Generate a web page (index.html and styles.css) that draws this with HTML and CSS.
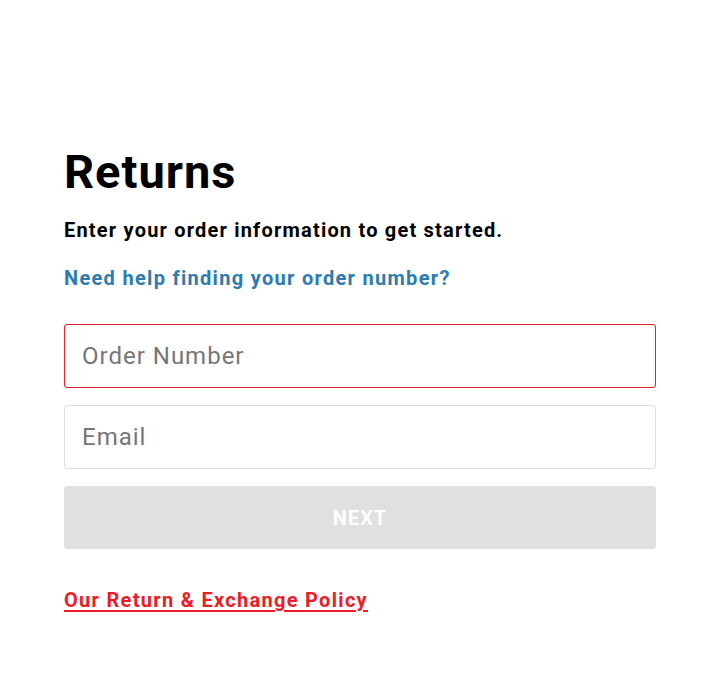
FILE: index.html
```html
<!DOCTYPE html>
<html lang="en">
<head>
    <meta charset="UTF-8">
    <meta name="viewport" content="width=device-width, initial-scale=1.0">
    <title>Returns</title>
    <link rel="stylesheet" href="styles.css">
</head>
<body>
    <main class="returns">
        <h1 class="returns-title">Returns</h1>
        <p class="returns-intro">Enter your order information to get started.</p>
        <a class="help-link" href="#">Need help finding your order number?</a>
        <form class="returns-form">
            <input class="field field-active" type="text" placeholder="Order Number" autofocus>
            <input class="field" type="email" placeholder="Email">
            <button class="next-btn" type="button" disabled>NEXT</button>
        </form>
        <a class="policy-link" href="#">Our Return &amp; Exchange Policy</a>
    </main>
</body>
</html>
```

FILE: styles.css
```css
body {
    margin: 0;
    background: #fff;
    font-family: Roboto, "Liberation Sans", sans-serif;
    color: #000;
}
.returns {
    width: 592px;
    padding: 140px 64px 0;
    display: flex;
    flex-direction: column;
    align-items: flex-start;
}
.returns-title {
    font-size: 47px;
    font-weight: 700;
    letter-spacing: 1px;
    margin: 0;
    line-height: 64px;
}
.returns-intro {
    font-size: 20px;
    font-weight: 700;
    letter-spacing: 1.2px;
    margin: 14px 0 0;
    line-height: 24px;
}
.help-link {
    margin-top: 24px;
    font-size: 20px;
    font-weight: 700;
    letter-spacing: 1.3px;
    line-height: 24px;
    color: #2c7bb1;
    text-decoration: none;
}
.returns-form {
    width: 100%;
    margin-top: 34px;
    display: flex;
    flex-direction: column;
    gap: 17px;
}
.field {
    box-sizing: border-box;
    width: 100%;
    height: 64px;
    padding: 0 17px;
    border: 1px solid #dedede;
    border-radius: 3px;
    font-family: inherit;
    font-size: 24px;
    letter-spacing: 1px;
    color: #333;
    caret-color: #000;
    outline: none;
}
.field::placeholder {
    color: #767676;
}
.field-active {
    border-color: #e8202a;
}
.next-btn {
    height: 63px;
    border: none;
    border-radius: 3px;
    background: #e0e0e0;
    color: #fff;
    font-family: inherit;
    font-size: 20px;
    font-weight: 700;
    letter-spacing: 1px;
}
.policy-link {
    margin-top: 38px;
    font-size: 20px;
    font-weight: 700;
    letter-spacing: 1.3px;
    line-height: 26px;
    color: #ee1c25;
    text-decoration: underline;
    text-decoration-thickness: 2px;
    text-underline-offset: 3px;
}
```
